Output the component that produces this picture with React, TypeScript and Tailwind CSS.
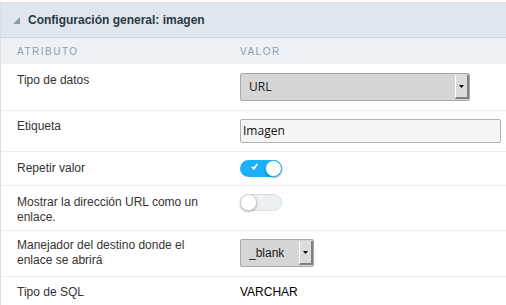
import type { ReactNode } from "react";

function Select({ value, width }: { value: ReactNode; width: string }) {
  return (
    <div
      className={`${width} flex h-[28px] items-stretch rounded-[2px] border border-[#a9a9a9] bg-[#d6d6d6]`}
    >
      <div className="flex flex-1 items-center pl-[8px] text-[12px] text-[#1a1a1a]">{value}</div>
      <div className="my-[1px] mr-0 flex w-[14px] items-center justify-center border-l border-l-white border-r-2 border-r-[#808080] border-b-2 border-b-[#808080] bg-[#dcdcdc]">
        <svg width="5" height="3" viewBox="0 0 5 3">
          <polygon points="0,0 5,0 2.5,3" fill="#000" />
        </svg>
      </div>
    </div>
  );
}

function Toggle({ on }: { on: boolean }) {
  if (on) {
    return (
      <div className="relative h-[17px] w-[42px] rounded-full bg-[#1fb1f7]">
        <svg className="absolute left-[11px] top-[3px]" width="7" height="7" viewBox="0 0 7 7">
          <path d="M0.8 3.8 L2.8 5.8 L6.3 1" stroke="#fff" strokeWidth="1.7" fill="none" />
        </svg>
        <div className="absolute right-0 top-0 h-[17px] w-[17px] rounded-full border border-[#1fb1f7] bg-white shadow-[0_1px_2px_rgba(0,0,0,0.35)]" />
      </div>
    );
  }
  return (
    <div className="relative h-[17px] w-[42px] rounded-full border border-[#d6dce2] bg-[#edf0f3]">
      <div className="absolute left-[-1px] top-[-1px] h-[17px] w-[17px] rounded-full border border-[#cfd5db] bg-white shadow-[0_1px_2px_rgba(0,0,0,0.3)]" />
    </div>
  );
}

function Row({
  label,
  children,
  h,
  lpt,
  vpt,
  last,
}: {
  label: ReactNode;
  children: ReactNode;
  h: string;
  lpt: string;
  vpt: string;
  last?: boolean;
}) {
  return (
    <div
      className={`grid grid-cols-[239px_1fr] ${h} ${last ? "" : "border-b border-[#e9eef2]"}`}
    >
      <div className={`${lpt} pl-[16px] pr-[23px] text-[12px] leading-[15px] text-[#333]`}>{label}</div>
      <div className={vpt}>{children}</div>
    </div>
  );
}

export default function App() {
  return (
    <div className="h-[305px] w-[506px] overflow-hidden bg-white pt-[2px] font-['Liberation_Sans',Arial,sans-serif]">
      <div className="h-full border-l border-t border-[#d8dfe6]">
        <div className="flex h-[35px] items-center gap-[8px] border-b border-[#cdd6df] bg-[#dfe6ed] pl-[12px]">
          <svg width="7" height="7" viewBox="0 0 7 7">
            <polygon points="7,0 7,7 0,7" fill="#8e9ca9" />
          </svg>
          <span className="text-[12px] font-bold text-[#2c3845]">Configuración general: imagen</span>
        </div>
        <div className="grid h-[26px] grid-cols-[239px_1fr] items-center bg-[#eef2f5] text-[10px] tracking-[1.5px] text-[#8aa0b2]">
          <div className="pl-[16px]">ATRIBUTO</div>
          <div>VALOR</div>
        </div>
        <Row label="Tipo de datos" h="h-[47px]" lpt="pt-[9px]" vpt="pt-[9px]">
          <Select
            width="w-[230px]"
            value={<span className="font-['Open_Sans',sans-serif]">URL</span>}
          />
        </Row>
        <Row label="Etiqueta" h="h-[41px]" lpt="pt-[8px]" vpt="pt-[8px]">
          <div className="flex h-[24px] w-[261px] items-center rounded-[2px] border border-[#aab1b8] bg-[#f5f5f5] pl-[2px] font-['Open_Sans',sans-serif] text-[12px] text-[#111]">
            Imagen
          </div>
        </Row>
        <Row label="Repetir valor" h="h-[34px]" lpt="pt-[9px]" vpt="pt-[8px]">
          <Toggle on />
        </Row>
        <Row
          label="Mostrar la dirección URL como un enlace."
          h="h-[45px]"
          lpt="pt-[9px]"
          vpt="pt-[8px]"
        >
          <Toggle on={false} />
        </Row>
        <Row
          label="Manejador del destino donde el enlace se abrirá"
          h="h-[46px]"
          lpt="pt-[7px]"
          vpt="pt-[8px]"
        >
          <Select width="w-[74px]" value="_blank" />
        </Row>
        <Row label="Tipo de SQL" h="h-[28px]" lpt="pt-[8px]" vpt="pt-[8px]" last>
          <div className="text-[12px] leading-[15px] text-[#000]">VARCHAR</div>
        </Row>
      </div>
    </div>
  );
}
